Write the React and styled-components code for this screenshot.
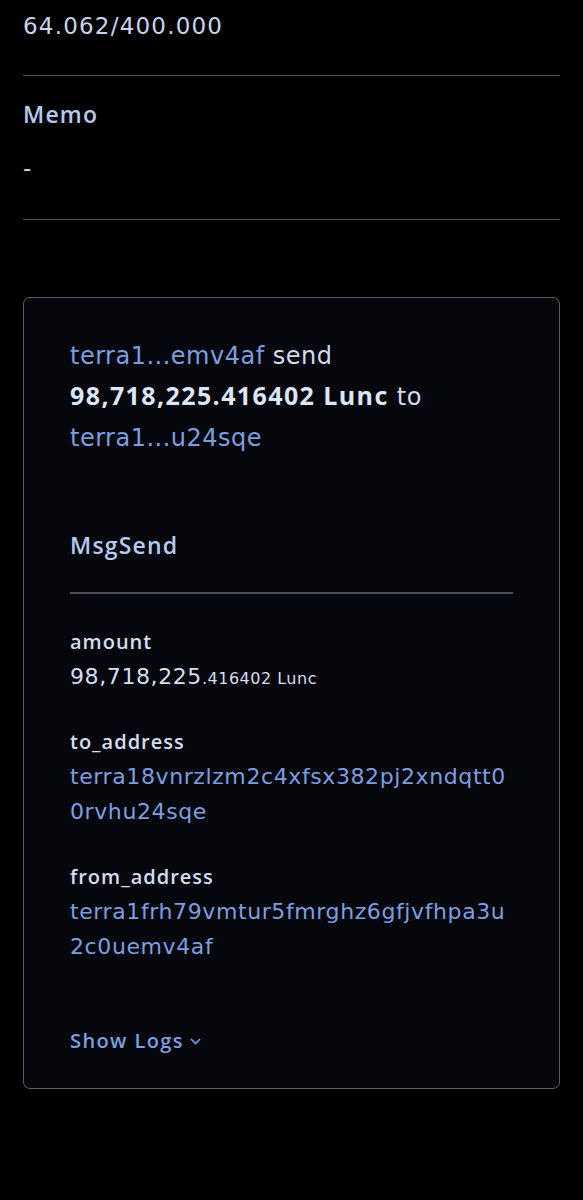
import React from "react";
import styled, { createGlobalStyle } from "styled-components";

const GlobalStyle = createGlobalStyle`
  body {
    margin: 0;
    background: #000;
    font-family: "DejaVu Sans", "Open Sans", sans-serif;
  }
`;

const Page = styled.div`
  padding: 0 23px 0 23px;
  min-height: 1200px;
  background: #000;
`;

const Section = styled.div`
  padding: ${(p) => p.pad || "0"};
  border-bottom: 1px solid #4e5159;
`;

const Label = styled.div`
  color: #b7cbef;
  font-family: "Open Sans", sans-serif;
  font-size: 23px;
  font-weight: 600;
  letter-spacing: 1.2px;
  line-height: 30px;
`;

const Value = styled.div`
  color: #c9d4ea;
  font-size: 23px;
  letter-spacing: 1.2px;
  line-height: 30px;
  margin-top: ${(p) => p.top || "0"};
`;

const Card = styled.div`
  margin-top: 77px;
  border: 1px solid #5b5e66;
  border-radius: 7px;
  background: #05070d;
  padding: 38px 46px 32px 46px;
`;

const Summary = styled.div`
  color: #d2dcf0;
  font-size: 24px;
  letter-spacing: 0.5px;
  line-height: 41px;
`;

const Link = styled.span`
  color: #7d9fe0;
`;

const Strong = styled.span`
  font-family: "Open Sans", sans-serif;
  font-weight: 700;
  font-size: 25px;
  letter-spacing: 1.4px;
  line-height: 30px;
  color: #dde6f7;
`;

const MsgTitle = styled.div`
  margin-top: 71px;
  padding-bottom: 32px;
  border-bottom: 2px solid #4a4d55;
  color: #b7cbef;
  font-family: "Open Sans", sans-serif;
  font-size: 23px;
  font-weight: 600;
  letter-spacing: 1.2px;
  line-height: 30px;
`;

const Field = styled.div`
  margin-top: ${(p) => p.top || "31px"};
`;

const FieldName = styled.div`
  color: #d6dff0;
  font-family: "Open Sans", sans-serif;
  font-size: 20px;
  font-weight: 600;
  letter-spacing: 1px;
  line-height: 30px;
`;

const FieldValue = styled.div`
  color: ${(p) => (p.link ? "#7d9fe0" : "#d6dff0")};
  font-size: 22px;
  letter-spacing: 0.6px;
  line-height: 35px;
  word-break: break-all;
  margin-top: 2px;
`;

const Decimals = styled.span`
  font-size: 16px;
  letter-spacing: 0.5px;
`;

const ShowLogs = styled.button`
  margin-top: 62px;
  padding: 0;
  background: none;
  border: none;
  display: flex;
  align-items: center;
  gap: 6px;
  color: #7d9fe0;
  font-family: "Open Sans", sans-serif;
  font-size: 20px;
  font-weight: 600;
  letter-spacing: 1.4px;
  line-height: 30px;
  cursor: pointer;
`;

export default function App() {
  return (
    <>
      <GlobalStyle />
      <Page>
        <Section pad="11px 0 34px 0">
          <Value>64.062/400.000</Value>
        </Section>
        <Section pad="23px 0 36px 0">
          <Label>Memo</Label>
          <Value top="24px">-</Value>
        </Section>
        <Card>
          <Summary>
            <Link>terra1...emv4af</Link> send{" "}
            <Strong>98,718,225.416402 Lunc</Strong> to{" "}
            <Link>terra1...u24sqe</Link>
          </Summary>
          <MsgTitle>MsgSend</MsgTitle>
          <Field top="33px">
            <FieldName>amount</FieldName>
            <FieldValue>
              98,718,225<Decimals>.416402 Lunc</Decimals>
            </FieldValue>
          </Field>
          <Field>
            <FieldName>to_address</FieldName>
            <FieldValue link>terra18vnrzlzm2c4xfsx382pj2xndqtt00rvhu24sqe</FieldValue>
          </Field>
          <Field top="33px">
            <FieldName>from_address</FieldName>
            <FieldValue link>terra1frh79vmtur5fmrghz6gfjvfhpa3u2c0uemv4af</FieldValue>
          </Field>
          <ShowLogs>
            Show Logs
            <svg width="11" height="7" viewBox="0 0 11 7" fill="none">
              <path d="M1 1l4.5 4.5L10 1" stroke="#7d9fe0" strokeWidth="1.6" />
            </svg>
          </ShowLogs>
        </Card>
      </Page>
    </>
  );
}
